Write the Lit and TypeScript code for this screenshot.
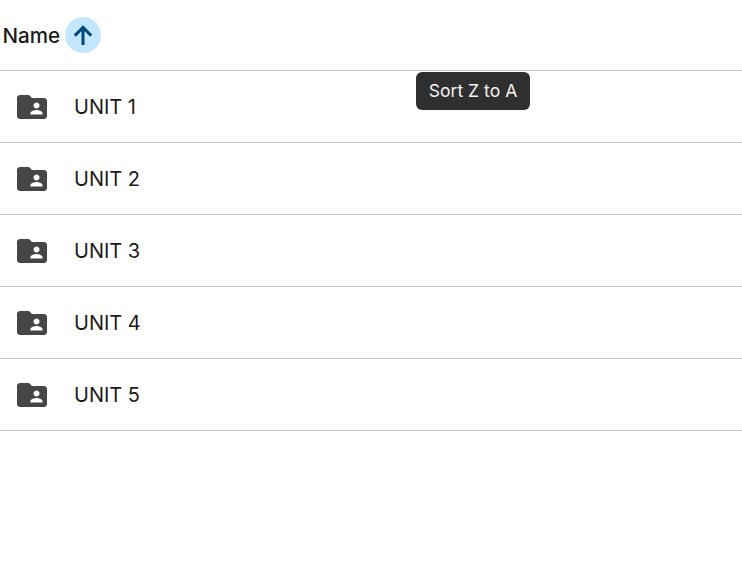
import { css, html, LitElement } from "lit";
import { customElement } from "lit/decorators.js";

const UNITS = ["UNIT 1", "UNIT 2", "UNIT 3", "UNIT 4", "UNIT 5"];

const folderIcon = html`<svg class="folder" viewBox="0 0 24 24" fill="currentColor">
  <path
    d="M20 6h-8l-2-2H4c-1.1 0-1.99.9-1.99 2L2 18c0 1.1.9 2 2 2h16c1.1 0 2-.9 2-2V8c0-1.1-.9-2-2-2zm-5 3c1.1 0 2 .9 2 2s-.9 2-2 2-2-.9-2-2 .9-2 2-2zm4 8h-8v-1c0-1.33 2.67-2 4-2s4 .67 4 2v1z"
  />
</svg>`;

@customElement("app-root")
class AppRoot extends LitElement {
  protected render() {
    return html`
      <div class="header">
        <span class="name">Name</span>
        <button class="sort">
          <svg viewBox="0 0 24 24" fill="none" stroke="currentColor">
            <path d="M12 20.5V5.5M5 12.5l7-7 7 7" />
          </svg>
        </button>
        <div class="tooltip">Sort Z to A</div>
      </div>
      ${UNITS.map(
        (unit) => html`<div class="row">
          ${folderIcon}
          <span class="label">${unit}</span>
        </div>`
      )}
    `;
  }

  static styles = css`
    :host {
      display: block;
      font-family: Inter, "Liberation Sans", sans-serif;
      color: #1f1f1f;
      background: #fff;
    }

    .header {
      position: relative;
      display: flex;
      align-items: center;
      height: 70px;
      padding-left: 2.5px;
      border-bottom: 1px solid #c7c7c7;
    }

    .name {
      width: 62.5px;
      font-size: 20.6px;
      font-weight: 450;
      color: #1a1a1a;
    }

    .sort {
      display: flex;
      align-items: center;
      justify-content: center;
      width: 36px;
      height: 36px;
      padding: 0;
      border: none;
      border-radius: 50%;
      background: #c2e7ff;
      color: #004a77;
    }

    .sort svg {
      width: 28px;
      height: 28px;
      stroke-width: 2.6;
    }

    .tooltip {
      position: absolute;
      left: 416px;
      top: 72px;
      box-sizing: border-box;
      height: 38px;
      width: 114px;
      padding-bottom: 2px;
      display: flex;
      align-items: center;
      justify-content: center;
      border-radius: 6px;
      background: #2f2f2f;
      color: #f2f2f2;
      font-size: 17.6px;
    }

    .row {
      display: flex;
      align-items: center;
      height: 71px;
      padding-left: 14px;
      border-bottom: 1px solid #c7c7c7;
    }

    .folder {
      width: 36px;
      height: 36px;
      color: #444746;
      margin-right: 24px;
    }

    .label {
      font-size: 20px;
      color: #1a1a1a;
    }
  `;
}

declare global {
  interface HTMLElementTagNameMap {
    "app-root": AppRoot;
  }
}
